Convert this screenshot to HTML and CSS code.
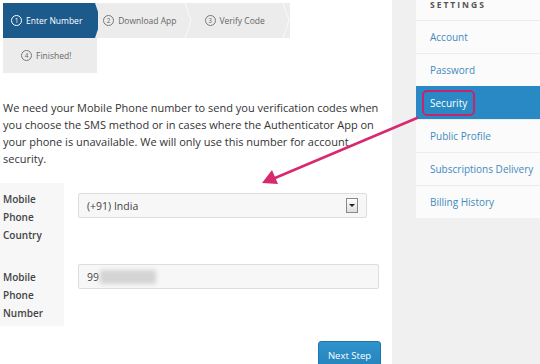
FILE: index.html
```html
<!DOCTYPE html>
<html lang="en">
<head>
    <meta charset="UTF-8">
    <meta name="viewport" content="width=device-width, initial-scale=1.0">
    <title>Security Settings</title>
    <link rel="stylesheet" href="styles.css">
</head>
<body>
    <div class="page">
        <main class="main">
            <div class="steps">
                <div class="step active"><span class="num">1</span> Enter Number</div>
                <div class="step"><span class="num">2</span> Download App</div>
                <svg class="sep" width="8" height="35" viewBox="0 0 8 35"><polyline points="1,0 7,17.5 1,35" fill="none" stroke="#f9f9f9" stroke-width="1"/></svg>
                <div class="step"><span class="num">3</span> Verify Code</div>
                <svg class="sep" width="8" height="35" viewBox="0 0 8 35"><polyline points="1,0 7,17.5 1,35" fill="none" stroke="#f9f9f9" stroke-width="1"/></svg>
            </div>
            <div class="steps second">
                <div class="step last"><span class="num">4</span> Finished!</div>
            </div>

            <p class="intro">We need your Mobile Phone number to send you verification codes when you choose the SMS method or in cases where the Authenticator App on your phone is unavailable. We will only use this number for account security.</p>

            <form class="form">
                <div class="row">
                    <label class="label">Mobile Phone Country</label>
                    <div class="field">
                        <div class="select">
                            <span>(+91) India</span>
                            <span class="drop"></span>
                        </div>
                    </div>
                </div>
                <div class="row">
                    <label class="label">Mobile Phone Number</label>
                    <div class="field">
                        <div class="input">99<span class="blur"></span></div>
                    </div>
                </div>
            </form>

            <div class="actions">
                <button type="button" class="btn">Next Step</button>
            </div>
        </main>

        <aside class="side">
            <div class="panel">
                <div class="panel-head">SETTINGS</div>
                <a class="item" href="#">Account</a>
                <a class="item" href="#">Password</a>
                <a class="item current" href="#"><span class="mark">Security</span></a>
                <a class="item" href="#">Public Profile</a>
                <a class="item" href="#">Subscriptions Delivery</a>
                <a class="item" href="#">Billing History</a>
            </div>
        </aside>
    </div>

    <svg class="arrow" width="540" height="364" viewBox="0 0 540 364">
        <line x1="417" y1="118" x2="275" y2="178" stroke="#d8286f" stroke-width="2.5" stroke-linecap="round"/>
        <polygon points="262,183 278,184 272,170" fill="#d8286f"/>
    </svg>
</body>
</html>
```

FILE: styles.css
```css
body {
    margin: 0;
    font-family: 'Open Sans', sans-serif;
    color: #333;
    background: #fff;
}
.page {
    display: flex;
    width: 540px;
    height: 364px;
    overflow: hidden;
}
.main {
    width: 389px;
    padding: 3px 0 0 3px;
    flex-shrink: 0;
}

/* steps */
.steps {
    display: flex;
    width: 287px;
    height: 35px;
    background: #ececec;
}
.step {
    display: flex;
    align-items: center;
    gap: 4px;
    font-size: 8.5px;
    color: #666;
    height: 35px;
    white-space: nowrap;
    box-sizing: border-box;
}
.step .num {
    display: inline-flex;
    align-items: center;
    justify-content: center;
    width: 9px;
    height: 9px;
    border: 1.5px solid #777;
    border-radius: 50%;
    font-size: 6.5px;
    color: #666;
}
.step.active {
    background: #1d5a8c;
    color: #fff;
    width: 98px;
    padding-left: 8px;
    clip-path: polygon(0 0, 92px 0, 98px 50%, 92px 100%, 0 100%);
}
.step.active .num {
    border-color: #fff;
    color: #fff;
}
.step:nth-child(2) {
    width: 88px;
    padding-left: 5px;
}
.step:nth-child(4) {
    width: 93px;
    padding-left: 13px;
}
.sep {
    flex-shrink: 0;
}
.steps.second {
    width: 94px;
}
.step.last {
    padding-left: 18px;
}

.intro {
    font-size: 11px;
    line-height: 17px;
    margin: 26px 5px 0 0;
}

/* form */
.form {
    margin: 16px 0 0 -3px;
}
.row {
    display: flex;
}
.label {
    box-sizing: border-box;
    width: 64px;
    padding: 7px 0 0 3px;
    background: #f7f7f7;
    font-size: 10px;
    font-weight: 600;
    line-height: 18px;
    color: #444;
}
.row:first-child .label {
    height: 76px;
}
.row:last-child .label {
    height: 67px;
    padding-top: 9px;
}
.field {
    padding: 10px 0 0 14px;
}
.row:last-child .field {
    padding-top: 5px;
}
.select {
    box-sizing: border-box;
    width: 289px;
    height: 25px;
    border: 1px solid #ddd;
    border-radius: 2px;
    background: #f7f7f7;
    display: flex;
    align-items: center;
    justify-content: space-between;
    padding: 0 8px 0 8px;
    font-size: 10.5px;
    color: #444;
}
.drop {
    width: 10px;
    height: 13px;
    border: 1px solid #888;
    background: linear-gradient(#fff, #ddd);
    position: relative;
}
.drop::after {
    content: "";
    position: absolute;
    left: 2px;
    top: 5px;
    border-left: 3px solid transparent;
    border-right: 3px solid transparent;
    border-top: 3px solid #222;
}
.input {
    box-sizing: border-box;
    width: 301px;
    height: 25px;
    border: 1px solid #ddd;
    border-radius: 2px;
    background: #f7f7f7;
    display: flex;
    align-items: center;
    padding-left: 8px;
    font-size: 10.5px;
    color: #444;
}
.blur {
    display: inline-block;
    width: 56px;
    height: 14px;
    margin-left: 1px;
    background: #d4d4d4;
    filter: blur(2px);
}

.actions {
    display: flex;
    justify-content: flex-end;
    margin: 15px 11px 0 0;
}
.btn {
    background: linear-gradient(#2f93cc, #2583bd);
    color: #fff;
    border: 1px solid #1f76ad;
    border-radius: 3px;
    font-family: 'Open Sans', sans-serif;
    font-size: 9.5px;
    width: 63px;
    height: 28px;
    padding: 0;
}

/* sidebar */
.side {
    flex: 1;
    background: #f0f0f0;
    padding-left: 24px;
}
.panel {
    background: #fbfbfb;
}
.panel-head {
    height: 20px;
    line-height: 10px;
    padding-left: 14px;
    font-size: 8.5px;
    font-weight: 700;
    letter-spacing: 2px;
    color: #555;
}
.item {
    display: flex;
    align-items: center;
    height: 32px;
    border-top: 1px solid #ececec;
    padding-left: 14px;
    font-size: 10px;
    color: #3f8ac0;
    text-decoration: none;
    white-space: nowrap;
}
.item.current {
    background: #2889c4;
    color: #fff;
    border-top-color: #2889c4;
}
.mark {
    border: 2px solid #c8246e;
    border-radius: 5px;
    padding: 4px 6px;
    margin-left: -8px;
}

.arrow {
    position: absolute;
    left: 0;
    top: 0;
    pointer-events: none;
}
```
